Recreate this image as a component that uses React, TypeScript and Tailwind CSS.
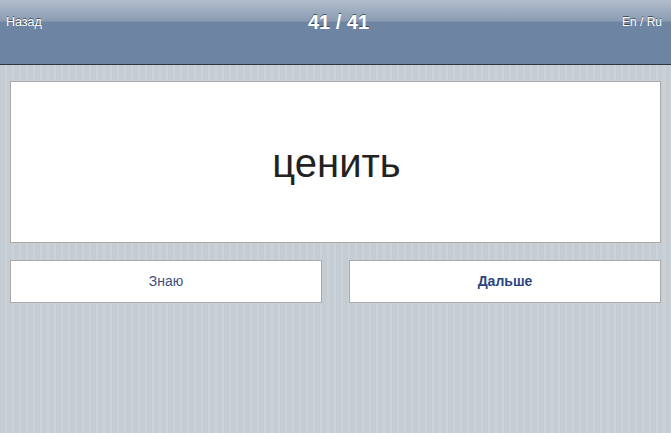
import React from 'react';

const App: React.FC = () => {
  return (
    <div className="min-h-screen font-['Liberation_Sans',Arial,sans-serif] bg-[repeating-linear-gradient(90deg,#c5ccd4_0_5px,#cbd2d8_5px_7px)]">
      <header className="relative h-[65px] border-b border-[#2d3642] bg-[linear-gradient(#b2bdcc,#8a9cb3_21px,#6d84a2_22px,#6d84a2)] text-white [text-shadow:0_-1px_0_rgba(0,0,0,0.5)]">
        <div className="flex items-start justify-between px-[6px] pt-[15px]">
          <a className="text-[12.5px] leading-[14px] cursor-pointer">Назад</a>
          <a className="text-[12px] leading-[14px] pr-[3px] cursor-pointer">En / Ru</a>
        </div>
        <div className="absolute left-0 right-0 top-[10px] pl-[6px] text-center text-[20px] font-bold leading-[24px]">
          41 / 41
        </div>
      </header>

      <main className="px-[10px] pt-[16px]">
        <div className="flex h-[162px] items-center justify-center border border-[#a9a9a9] bg-white">
          <span className="text-[40px] leading-none text-[#222] pt-[2px] pl-[2px]">ценить</span>
        </div>

        <div className="mt-[17px] flex gap-[27px]">
          <button className="h-[43px] flex-1 border border-[#a9a9a9] bg-white text-[14px] text-[#3d4f7e]">
            Знаю
          </button>
          <button className="h-[43px] flex-1 border border-[#a9a9a9] bg-white text-[14px] font-bold text-[#2b4680]">
            Дальше
          </button>
        </div>
      </main>
    </div>
  );
};

export default App;
